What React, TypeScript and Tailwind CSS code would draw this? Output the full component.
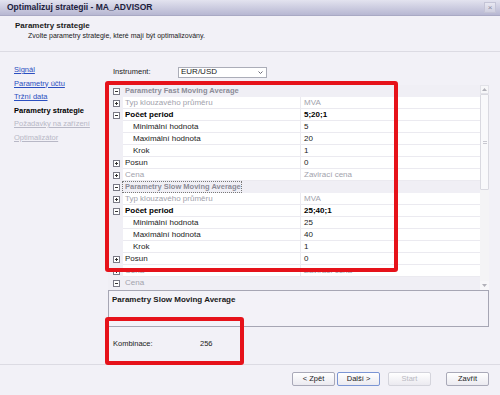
import React from 'react'

type Row = {
  label: string
  value?: string
  kind: 'category' | 'item' | 'sub'
  box?: 'plus' | 'minus'
  bold?: boolean
  muted?: boolean
  valueBold?: boolean
  valueMuted?: boolean
}

const fastRows: Row[] = [
  { label: 'Parametry Fast Moving Average', kind: 'category', box: 'minus' },
  { label: 'Typ klouzavého průměru', value: 'MVA', kind: 'item', box: 'plus', muted: true, valueMuted: true },
  { label: 'Počet period', value: '5;20;1', kind: 'item', box: 'minus', bold: true, valueBold: true },
  { label: 'Minimální hodnota', value: '5', kind: 'sub' },
  { label: 'Maximální hodnota', value: '20', kind: 'sub' },
  { label: 'Krok', value: '1', kind: 'sub' },
  { label: 'Posun', value: '0', kind: 'item', box: 'plus' },
  { label: 'Cena', value: 'Zavirací cena', kind: 'item', box: 'plus', muted: true, valueMuted: true },
]

const slowRows: Row[] = [
  { label: 'Parametry Slow Moving Average', kind: 'category', box: 'minus' },
  { label: 'Typ klouzavého průměru', value: 'MVA', kind: 'item', box: 'plus', muted: true, valueMuted: true },
  { label: 'Počet period', value: '25;40;1', kind: 'item', box: 'minus', bold: true, valueBold: true },
  { label: 'Minimální hodnota', value: '25', kind: 'sub' },
  { label: 'Maximální hodnota', value: '40', kind: 'sub' },
  { label: 'Krok', value: '1', kind: 'sub' },
  { label: 'Posun', value: '0', kind: 'item', box: 'plus' },
  { label: 'Cena', value: 'Zavirací cena', kind: 'item', box: 'plus', muted: true, valueMuted: true },
]

function ExpandBox({ type }: { type: 'plus' | 'minus' }) {
  return (
    <svg width="7" height="7" viewBox="0 0 7 7" className="block">
      <rect x="0.5" y="0.5" width="6" height="6" fill="#fff" stroke="#7a7a86" />
      <path d="M2 3.5h3" stroke="#333" />
      {type === 'plus' && <path d="M3.5 2v3" stroke="#333" />}
    </svg>
  )
}

function GridRow({ row, selected }: { row: Row; selected?: boolean }) {
  if (row.kind === 'category') {
    return (
      <div className="flex h-[12px] items-center bg-[#f0eff5]">
        <div className="flex w-[15px] justify-center pl-[1px]">{row.box && <ExpandBox type={row.box} />}</div>
        <span
          className={
            'pl-[2px] text-[7.5px] font-bold leading-[10px] text-[#8c8c98] ' +
            (selected ? 'outline outline-1 outline-dotted outline-[#777]' : '')
          }
        >
          {row.label}
        </span>
      </div>
    )
  }

  return (
    <div className="flex h-[12px] items-stretch">
      <div className="flex w-[15px] shrink-0 items-center justify-center bg-[#f0eff5] pl-[1px]">
        {row.box && <ExpandBox type={row.box} />}
      </div>
      <div
        className={
          'flex w-[178px] shrink-0 items-center border-b border-r border-[#ebeaf0] bg-white text-[8px] ' +
          (row.kind === 'sub' ? 'pl-[10px] ' : 'pl-[2px] ') +
          (row.bold ? 'font-bold text-black ' : '') +
          (row.muted ? 'text-[#a2a2ac] ' : 'text-[#1a1a1a] ')
        }
      >
        {row.label}
      </div>
      <div
        className={
          'flex flex-1 items-center border-b border-[#ebeaf0] bg-white pl-[3px] text-[8px] ' +
          (row.valueBold ? 'font-bold text-black ' : '') +
          (row.valueMuted ? 'text-[#a2a2ac]' : 'text-[#1a1a1a]')
        }
      >
        {row.value}
      </div>
    </div>
  )
}

function Scrollbar() {
  return (
    <div className="flex w-[9px] flex-col bg-[#f4f4f6]">
      <div className="flex h-[9px] items-center justify-center border border-[#e2e2e8] bg-[#f7f7f9]">
        <svg width="5" height="3" viewBox="0 0 5 3">
          <path d="M0 3L2.5 0L5 3z" fill="#b0b0b8" />
        </svg>
      </div>
      <div className="flex h-[96px] items-center justify-center rounded-[1px] border border-[#d9d9e0] bg-[#f9f9fb]">
        <div className="h-[3px] w-[4px] border-y border-[#c8c8d0]" />
      </div>
      <div className="flex-1" />
      <div className="flex h-[9px] items-center justify-center bg-[#f7f7f9]">
        <svg width="5" height="3" viewBox="0 0 5 3">
          <path d="M0 0L2.5 3L5 0z" fill="#b0b0b8" />
        </svg>
      </div>
    </div>
  )
}

function WizButton({ label, primary, disabled }: { label: string; primary?: boolean; disabled?: boolean }) {
  return (
    <button
      type="button"
      className={
        'flex h-[14px] w-[43px] items-center justify-center rounded-[2px] border bg-gradient-to-b from-white to-[#ebeaf0] text-[7.5px] ' +
        (primary ? 'border-[#7b95d4] ' : disabled ? 'border-[#d4d4dc] ' : 'border-[#a9a9b8] ') +
        (disabled ? 'text-[#b9b9c2]' : 'text-[#1a1a1a]')
      }
    >
      {label}
    </button>
  )
}

export default function App() {
  const navItems = [
    { label: 'Signál', state: 'link' },
    { label: 'Parametry účtu', state: 'link' },
    { label: 'Tržní data', state: 'link' },
    { label: 'Parametry strategie', state: 'active' },
    { label: 'Požadavky na zařízení', state: 'disabled' },
    { label: 'Optimalizátor', state: 'disabled' },
  ]

  return (
    <div
      className="relative flex h-[395px] w-[500px] flex-col overflow-hidden bg-[#f2f1f7] text-[#1a1a1a]"
      style={{ fontFamily: '"Liberation Sans", Arial, sans-serif' }}
    >
      {/* title bar */}
      <div className="flex h-[16px] items-center justify-between border-b border-[#a9a9c4] bg-gradient-to-b from-[#e3e3ef] to-[#b7b7d2] pl-[7px] pr-[4px]">
        <span className="text-[8.5px] font-bold text-[#20203c]">Optimalizuj strategii - MA_ADVISOR</span>
        <div className="flex h-[11px] w-[12px] items-center justify-center border border-[#c4c4d6] bg-gradient-to-b from-[#e8e8f2] to-[#cfcfe0] text-[8px] leading-none text-[#8a8aa0]">
          ×
        </div>
      </div>

      {/* header */}
      <div className="flex h-[36px] flex-col border-b border-[#dcdbe3] pl-[15px] pt-[5px]">
        <span className="text-[8px] font-bold leading-[10px]">Parametry strategie</span>
        <span className="pl-[13px] text-[7px] leading-[10px]">Zvolte parametry strategie, které mají být optimalizovány.</span>
      </div>

      {/* body */}
      <div className="flex h-[313px] border-b border-[#dcdbe3]">
        <div className="flex w-[105px] shrink-0 flex-col pl-[14px] pt-[12px]">
          {navItems.map(item => (
            <span
              key={item.label}
              className={
                'h-[13.5px] text-[7.5px] leading-[12px] ' +
                (item.state === 'active'
                  ? 'font-bold text-black'
                  : item.state === 'link'
                    ? 'text-[#2b4fc0] underline'
                    : 'text-[#b8b8c6] underline')
              }
            >
              {item.label}
            </span>
          ))}
        </div>

        <div className="flex flex-1 flex-col pl-[3px] pr-[11px]">
          <div className="mt-[14px] flex h-[12px] items-center">
            <span className="w-[70px] pl-[5px] text-[7.5px]">Instrument:</span>
            <div className="flex h-[11px] w-[89px] items-center justify-between border border-[#abadb8] bg-white pl-[2px]">
              <span className="text-[8px]">EUR/USD</span>
              <div className="flex h-full w-[11px] items-center justify-center">
                <svg width="5" height="3" viewBox="0 0 5 3">
                  <path d="M0.5 0.5L2.5 2.5L4.5 0.5" fill="none" stroke="#6a6a78" />
                </svg>
              </div>
            </div>
          </div>

          <div className="mt-[7px] flex h-[205px] overflow-hidden bg-[#f0eff5]">
            <div className="flex flex-1 flex-col">
              {fastRows.map((r, i) => (
                <GridRow key={'f' + i} row={r} />
              ))}
              {slowRows.map((r, i) => (
                <GridRow key={'s' + i} row={r} selected={i === 0} />
              ))}
              <div className="flex h-[12px] items-center bg-[#f0eff5]">
                <div className="flex w-[15px] justify-center pl-[1px]">
                  <ExpandBox type="minus" />
                </div>
                <span className="pl-[2px] text-[8px] text-[#a2a2ac]">Cena</span>
              </div>
            </div>
            <Scrollbar />
          </div>

          <div className="flex h-[37px] border border-[#a6a6b4] bg-[#f3f2f8] px-[3px] pt-[3px]">
            <span className="text-[8px] font-bold">Parametry Slow Moving Average</span>
          </div>

          <div className="mt-[11px] flex items-center">
            <span className="w-[92px] pl-[5px] text-[7.5px]">Kombinace:</span>
            <span className="text-[7.5px]">256</span>
          </div>
        </div>
      </div>

      {/* buttons */}
      <div className="flex flex-1 items-start pt-[7px] pl-[292px]">
        <WizButton label="< Zpět" />
        <div className="w-[2px]" />
        <WizButton label="Další >" primary />
        <div className="w-[8px]" />
        <WizButton label="Start" disabled />
        <div className="w-[15px]" />
        <WizButton label="Zavřít" />
      </div>

      {/* red annotation frames */}
      <div className="pointer-events-none absolute left-[105px] top-[81px] h-[191px] w-[293px] rounded-[3px] border-4 border-[#e6121a]" />
      <div className="pointer-events-none absolute left-[105px] top-[317px] h-[48px] w-[139px] rounded-[3px] border-4 border-[#e6121a]" />
    </div>
  )
}
